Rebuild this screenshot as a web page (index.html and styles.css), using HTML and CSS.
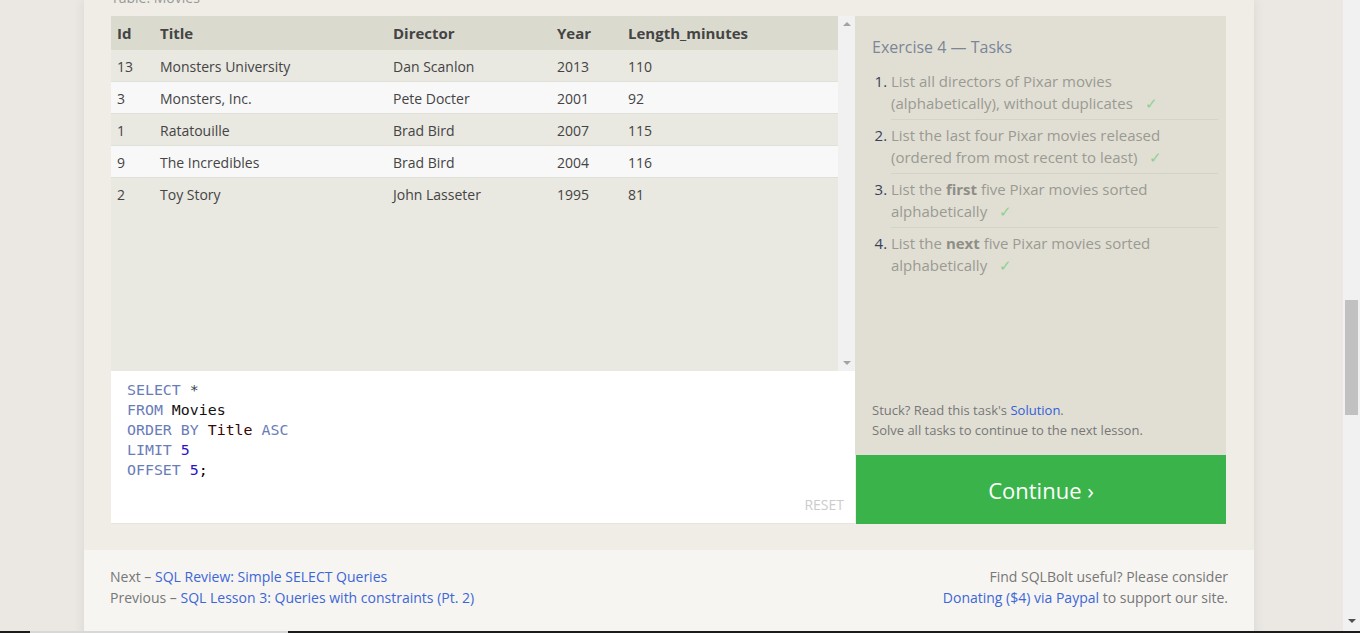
FILE: index.html
```html
<!DOCTYPE html>
<html>
<head>
<meta charset="utf-8">
<link rel="stylesheet" href="styles.css">
</head>
<body>
<div class="page">
  <div class="main">
    <div class="exercise">
      <div class="caption">Table: Movies</div>
      <div class="work">
        <div class="left">
          <div class="results">
            <div class="table-wrap">
              <table class="movies">
                <colgroup><col class="c1"><col class="c2"><col class="c3"><col class="c4"><col class="c5"></colgroup>
                <thead>
                  <tr><th>Id</th><th>Title</th><th>Director</th><th>Year</th><th>Length_minutes</th></tr>
                </thead>
                <tbody>
                  <tr><td>13</td><td>Monsters University</td><td>Dan Scanlon</td><td>2013</td><td>110</td></tr>
                  <tr><td>3</td><td>Monsters, Inc.</td><td>Pete Docter</td><td>2001</td><td>92</td></tr>
                  <tr><td>1</td><td>Ratatouille</td><td>Brad Bird</td><td>2007</td><td>115</td></tr>
                  <tr><td>9</td><td>The Incredibles</td><td>Brad Bird</td><td>2004</td><td>116</td></tr>
                  <tr><td>2</td><td>Toy Story</td><td>John Lasseter</td><td>1995</td><td>81</td></tr>
                </tbody>
              </table>
            </div>
            <div class="vscroll">
              <span class="arrow up"></span>
              <span class="arrow down"></span>
            </div>
          </div>
          <div class="editor">
            <pre class="code"><span class="kw">SELECT</span> <span class="op">*</span>
<span class="kw">FROM</span> <span class="id">Movies</span>
<span class="kw">ORDER BY</span> <span class="col">Title</span> <span class="kw">ASC</span>
<span class="kw">LIMIT</span> <span class="num">5</span>
<span class="kw">OFFSET</span> <span class="num">5</span>;</pre>
            <span class="reset">RESET</span>
          </div>
        </div>
        <div class="right">
          <div class="tasks">
            <h3 class="tasks-title">Exercise 4 — Tasks</h3>
            <ol class="task-list">
              <li>List all directors of Pixar movies (alphabetically), without duplicates <span class="check">✓</span></li>
              <li>List the last four Pixar movies released (ordered from most recent to least) <span class="check">✓</span></li>
              <li>List the <b>first</b> five Pixar movies sorted alphabetically <span class="check">✓</span></li>
              <li>List the <b>next</b> five Pixar movies sorted alphabetically <span class="check">✓</span></li>
            </ol>
            <div class="help">
              <div>Stuck? Read this task's <a href="#">Solution</a>.</div>
              <div>Solve all tasks to continue to the next lesson.</div>
            </div>
          </div>
          <a class="continue" href="#">Continue ›</a>
        </div>
      </div>
    </div>
    <div class="footer">
      <div class="nav">
        <div>Next – <a href="#">SQL Review: Simple SELECT Queries</a></div>
        <div>Previous – <a href="#">SQL Lesson 3: Queries with constraints (Pt. 2)</a></div>
      </div>
      <div class="donate">
        <div>Find SQLBolt useful? Please consider</div>
        <div><a href="#">Donating ($4) via Paypal</a> to support our site.</div>
      </div>
    </div>
  </div>
</div>
<div class="page-scroll"><span class="thumb"></span><span class="parrow"></span></div>
<div class="taskbar"><span class="seg"></span></div>
</body>
</html>
```

FILE: styles.css
```css
html, body {
  margin: 0;
  padding: 0;
  height: 100%;
  overflow: hidden;
}
body {
  background: #ebe7e3;
  font-family: "Open Sans", "Liberation Sans", sans-serif;
  color: #555;
}
.page {
  display: flex;
  padding-left: 84px;
}
.main {
  width: 1170px;
  background: #efede6;
  box-shadow: -4px 0 8px rgba(0, 0, 0, 0.04), 4px 0 8px rgba(0, 0, 0, 0.04);
}
.exercise {
  padding: 0 28px 26px 27px;
}
.caption {
  margin-top: -12px;
  height: 20px;
  line-height: 20px;
  margin-bottom: 8px;
  font-size: 14px;
  color: #999;
}
.work {
  display: flex;
}
.left {
  width: 744px;
  display: flex;
  flex-direction: column;
}
.results {
  display: flex;
  height: 355px;
  background: #e9e8e1;
}
.table-wrap {
  flex: 1;
}
.movies {
  width: 100%;
  border-collapse: collapse;
  table-layout: fixed;
  font-size: 14px;
  color: #444;
}
.c1 { width: 43px; }
.c2 { width: 233px; }
.c3 { width: 164px; }
.c4 { width: 71px; }
.movies th {
  text-align: left;
  font-weight: 700;
  font-size: 15px;
  color: #444;
  background: #dbdacf;
  height: 34px;
  padding: 0 6px;
}
.movies td {
  height: 29px;
  padding: 2px 6px 0 6px;
  border-bottom: 1px solid #e0dfd8;
}
.movies tbody tr:nth-child(odd) td {
  background: #e9e8e1;
}
.movies tbody tr:nth-child(even) td {
  background: #f8f8f8;
}
.movies tbody tr:last-child td {
  border-bottom: none;
}
.vscroll {
  width: 17px;
  background: #f1f1f1;
  position: relative;
}
.arrow {
  position: absolute;
  left: 5px;
  width: 0;
  height: 0;
  border-left: 4px solid transparent;
  border-right: 4px solid transparent;
}
.arrow.up {
  top: 6px;
  border-bottom: 4px solid #a3a3a3;
}
.arrow.down {
  bottom: 6px;
  border-top: 4px solid #a3a3a3;
}
.editor {
  position: relative;
  height: 153px;
  background: #fff;
  box-sizing: border-box;
  padding: 9px 16px;
  border-bottom: 1px solid #e6e4dd;
}
.code {
  margin: 0;
  font-family: "DejaVu Sans Mono", "Liberation Mono", monospace;
  font-size: 14.9px;
  line-height: 20px;
  color: #000;
}
.kw { color: #6a7cb8; }
.op { color: #334455; }
.id { color: #111; }
.col { color: #3a0505; }
.num { color: #2a10c8; }
.reset {
  position: absolute;
  right: 11px;
  bottom: 9px;
  font-size: 14px;
  color: #cccccc;
}
.right {
  width: 371px;
  display: flex;
  flex-direction: column;
}
.tasks {
  flex: 1;
  background: #e1dfd4;
  padding: 19px 8px 15px 17px;
  display: flex;
  flex-direction: column;
}
.tasks-title {
  margin: 0 0 11px 0;
  font-size: 16px;
  font-weight: 400;
  line-height: 24px;
  color: #7b8697;
}
.task-list {
  margin: 0;
  padding-left: 19px;
  font-size: 15px;
  line-height: 22px;
  color: #9a9a92;
  flex: 1;
}
.task-list li {
  padding: 0 0 5px 0;
  margin-bottom: 4px;
  border-bottom: 1px solid #d5d3c8;
}
.task-list li::marker {
  color: #3a3f5a;
}
.task-list li:last-child {
  border-bottom: none;
}
.task-list b {
  font-weight: 700;
  color: #8e8e86;
}
.check {
  color: #8fd08f;
  margin-left: 8px;
}
.help {
  font-size: 13px;
  line-height: 20px;
  color: #777;
}
.help a {
  color: #3060d8;
  text-decoration: none;
}
.continue {
  display: flex;
  align-items: center;
  justify-content: center;
  height: 69px;
  background: #3ab44a;
  color: #fff;
  font-size: 22px;
  text-decoration: none;
  margin-left: 1px;
}
.footer {
  background: #f6f5f2;
  height: 90px;
  box-sizing: border-box;
  padding: 16px 26px 0 26px;
  display: flex;
  justify-content: space-between;
  font-size: 14px;
  line-height: 21px;
  color: #777;
}
.footer a {
  color: #3d66d6;
  text-decoration: none;
}
.donate {
  text-align: right;
}
.page-scroll {
  position: fixed;
  top: 0;
  right: 0;
  width: 17px;
  height: 100%;
  background: #f1f1f1;
}
.thumb {
  position: absolute;
  left: 2px;
  top: 300px;
  width: 13px;
  height: 115px;
  background: #c1c1c1;
}
.parrow {
  position: absolute;
  left: 5px;
  bottom: 10px;
  width: 0;
  height: 0;
  border-left: 4px solid transparent;
  border-right: 4px solid transparent;
  border-top: 4px solid #505050;
}
.taskbar {
  position: fixed;
  left: 0;
  bottom: 0;
  width: 100%;
  height: 2px;
  background: #1b1b1b;
}
.seg {
  position: absolute;
  left: 30px;
  top: 0;
  width: 258px;
  height: 2px;
  background: #d8d8d8;
}
```
